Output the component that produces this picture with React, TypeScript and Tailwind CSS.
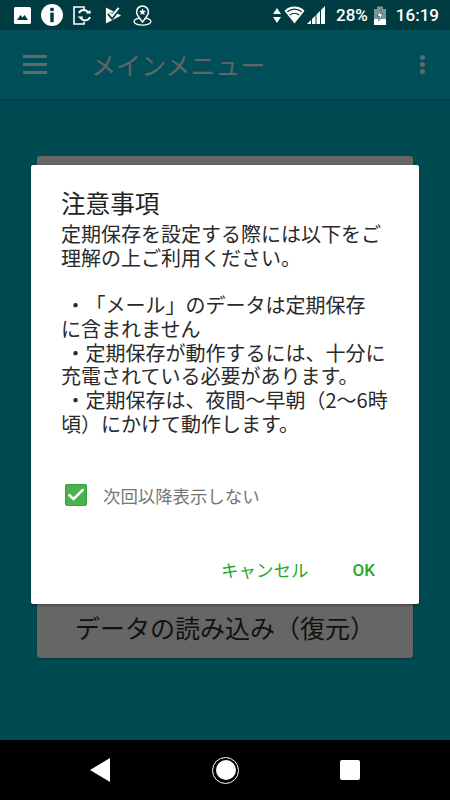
import { Check } from 'lucide-react';

const jp = "font-['Noto_Sans_CJK_JP','Noto_Sans',sans-serif] [text-spacing-trim:space-all]";

function StatusBar() {
  return (
    <div className="h-[30px] bg-[#003b41] flex items-center text-white shrink-0">
      <div className="flex items-center ml-[14px]">
        {/* picture */}
        <svg width="17" height="17" viewBox="0 0 17 17">
          <rect x="0" y="0" width="17" height="17" rx="1.5" fill="#fff" />
          <path d="M3 13 L6.5 8 L8.5 10.5 L10.5 8 L14 13 Z" fill="#003b41" />
        </svg>
        {/* info */}
        <svg className="ml-[10px]" width="22" height="22" viewBox="0 0 23 23">
          <circle cx="11.5" cy="11.5" r="11.5" fill="#fff" />
          <rect x="9.7" y="4" width="3.6" height="3.4" fill="#003b41" />
          <rect x="9.7" y="9" width="3.6" height="10" fill="#003b41" />
        </svg>
        {/* phone sync */}
        <svg className="ml-[10px]" width="20" height="19" viewBox="0 0 20 19">
          <path d="M11 3 V1 H1 V18 H11 V16" fill="none" stroke="#fff" strokeWidth="1.6" />
          <path d="M6 7 A5 5 0 0 1 15 6.5 M17 11 A5 5 0 0 1 8 12" fill="none" stroke="#fff" strokeWidth="2" />
          <path d="M13 7.5 H18 L17 4 Z M4.5 10.5 H10 L8.5 14 Z" fill="#fff" />
        </svg>
        {/* flag check */}
        <svg className="ml-[12px]" width="17" height="18" viewBox="0 0 18 18">
          <path d="M1 1 L17 9.5 L1 18 Z" fill="#fff" />
          <path d="M4 7 L7.5 11 L15 1.5" fill="none" stroke="#003b41" strokeWidth="4.5" />
          <path d="M4.5 6.5 L7.5 10 L14.5 1.5" fill="none" stroke="#fff" strokeWidth="2.2" />
        </svg>
        {/* map pin */}
        <svg className="ml-[11px]" width="19" height="21" viewBox="0 0 19 21">
          <ellipse cx="9.5" cy="16.5" rx="8.5" ry="3.6" fill="none" stroke="#fff" strokeWidth="1.3" />
          <path d="M9.5 17 C6 12.5 3.6 10.5 3.6 6.8 A5.9 5.9 0 0 1 15.4 6.8 C15.4 10.5 13 12.5 9.5 17 Z" fill="#003b41" stroke="#fff" strokeWidth="1.5" />
          <path d="M9.5 3.4 L10.5 5.8 L13 6 L11.1 7.6 L11.7 10 L9.5 8.7 L7.3 10 L7.9 7.6 L6 6 L8.5 5.8 Z" fill="#fff" />
        </svg>
      </div>
      <div className="ml-auto flex items-center mr-[11px]">
        <svg width="8" height="15" viewBox="0 0 8 15">
          <path d="M4 0 L8 6 H0 Z M0 9 H8 L4 15 Z" fill="#fff" />
        </svg>
        <svg className="ml-[3px]" width="21" height="18" viewBox="0 0 22 18">
          <path d="M0.5 4.5 A15 15 0 0 1 21.5 4.5 L11 18 Z" fill="#fff" />
          <path d="M3.5 5.6 A11.5 11.5 0 0 1 18.5 5.6 M6.2 9 A7.5 7.5 0 0 1 15.8 9" fill="none" stroke="#003b41" strokeWidth="1.3" />
        </svg>
        <svg className="ml-[2px]" width="18" height="18" viewBox="0 0 18 18">
          <path d="M0 18 L18 0 V18 Z" fill="#fff" />
          <path d="M4.5 10 V18 M9 6 V18 M13.5 2 V18" stroke="#003b41" strokeWidth="1" />
        </svg>
        <span className="font-['Roboto',sans-serif] ml-[11px] text-[17px] leading-none font-medium">28%</span>
        <svg className="ml-[6px]" width="12" height="19" viewBox="0 0 12 19">
          <path d="M0 3 H3 V0.5 H9 V3 H12 V19 H0 Z" fill="#7f9396" />
          <rect x="0" y="13" width="12" height="6" fill="#fff" />
          <path d="M7 3.5 L3 10 H5.6 L4.6 15 L9 8 H6.4 Z" fill="#fff" stroke="#003b41" strokeWidth="0.5" />
        </svg>
        <span className="font-['Roboto',sans-serif] ml-[10px] text-[17px] leading-none font-medium">16:19</span>
      </div>
    </div>
  );
}

function Toolbar() {
  return (
    <div className="h-[70px] bg-[#004f58] flex items-center shrink-0 border-b border-[#003f46]">
      <div className="ml-[23px] w-[24px] flex flex-col gap-[5px]">
        <div className="h-[3px] bg-[#5f6a6d]" />
        <div className="h-[3px] bg-[#5f6a6d]" />
        <div className="h-[3px] bg-[#5f6a6d]" />
      </div>
      <div className={`${jp} ml-[44px] text-[25px] leading-none text-[#626466]`}>メインメニュー</div>
      <div className="ml-auto mr-[25px] flex flex-col gap-[2px]">
        <div className="w-[5px] h-[5px] rounded-full bg-[#5f6a6d]" />
        <div className="w-[5px] h-[5px] rounded-full bg-[#5f6a6d]" />
        <div className="w-[5px] h-[5px] rounded-full bg-[#5f6a6d]" />
      </div>
    </div>
  );
}

function Dialog() {
  return (
    <div className={`${jp} absolute left-[31px] top-[165px] w-[388px] h-[439px] bg-white rounded-[2px] shadow-[0_1px_3px_rgba(0,0,0,0.4)] pl-[30px] pr-[20px] flex flex-col`}>
      <div className="mt-[21px] text-[24.6px] leading-[32px] text-[#222222]">注意事項</div>
      <div className="mt-[4px] text-[20px] leading-[23.7px] text-[#2a2a2a] whitespace-nowrap">
        <p>定期保存を設定する際には以下をご</p>
        <p>理解の上ご利用ください。</p>
        <p>&nbsp;</p>
        <p>&nbsp;・「メール」のデータは定期保存</p>
        <p>に含まれません</p>
        <p>&nbsp;・定期保存が動作するには、十分に</p>
        <p>充電されている必要があります。</p>
        <p>&nbsp;・定期保存は、夜間～早朝（2～6時</p>
        <p>頃）にかけて動作します。</p>
      </div>
      <div className="mt-[49px] flex items-center">
        <div className="w-[22px] h-[22px] ml-[4px] bg-[#4caf50] border border-[#2fa637] rounded-[2px] flex items-center justify-center">
          <Check size={20} strokeWidth={3} color="#ffffff" />
        </div>
        <span className="ml-[16px] text-[17.4px] leading-none text-[#757575]">次回以降表示しない</span>
      </div>
      <div className="mt-auto mb-[23px] flex justify-end text-[17.5px] leading-[22px] text-[#1faa2c]">
        <span>キャンセル</span>
        <span className="ml-[44px] mr-[24px] font-['Roboto',sans-serif] font-medium text-[17px]">OK</span>
      </div>
    </div>
  );
}

export default function App() {
  return (
    <div className="relative w-[450px] h-[800px] flex flex-col bg-[#004a52] overflow-hidden">
      <StatusBar />
      <Toolbar />
      <div className="flex-1 px-[37px] pt-[56px]">
        <div className="h-[80px] bg-[#666666] rounded-[3px]" />
        <div className={`${jp} mt-[362px] h-[60px] bg-[#666666] rounded-[3px] flex items-center justify-center text-[25px] text-[#111111] shadow-[0_1px_2px_rgba(0,0,0,0.3)]`}>
          データの読み込み（復元）
        </div>
      </div>
      <div className="h-[60px] bg-black shrink-0 flex items-center">
        <svg className="ml-[90px]" width="20" height="24" viewBox="0 0 20 24">
          <path d="M20 0 V24 L0 12 Z" fill="#fff" />
        </svg>
        <div className="ml-[102px] w-[27px] h-[27px] rounded-full border border-white flex items-center justify-center">
          <div className="w-[20px] h-[20px] rounded-full bg-white" />
        </div>
        <div className="ml-[101px] w-[20px] h-[20px] bg-white rounded-[2px]" />
      </div>
      <Dialog />
    </div>
  );
}
